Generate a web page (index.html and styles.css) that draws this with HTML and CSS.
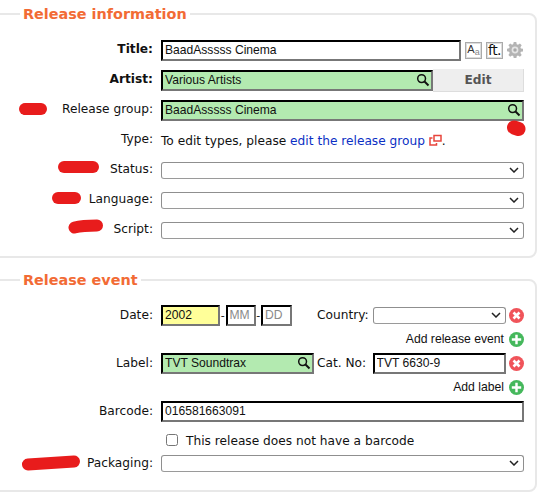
FILE: index.html
```html
<!DOCTYPE html>
<html lang="en">
<head>
<meta charset="utf-8">
<title>Release editor</title>
<link rel="stylesheet" href="styles.css">
</head>
<body>
<svg width="0" height="0" class="defs">
  <symbol id="mag" viewBox="0 0 14 14"><circle cx="5.6" cy="5.6" r="3.9" fill="none" stroke="#111" stroke-width="1.5"/><path d="M8.5 8.5l4 4" stroke="#111" stroke-width="1.9"/></symbol>
  <symbol id="chev" viewBox="0 0 10 6"><path d="M1 1l4 4 4-4" fill="none" stroke="#222" stroke-width="1.5"/></symbol>
  <symbol id="rem" viewBox="0 0 16 16"><circle cx="8" cy="8" r="8" fill="#f0545a"/><path d="M4.800 4.800l6.400 6.400M11.200 4.800l-6.400 6.400" stroke="#fff" stroke-width="2.800"/></symbol>
  <symbol id="add" viewBox="0 0 16 16"><circle cx="8" cy="8" r="8" fill="#45b85c"/><path d="M8 3v10M3 8h10" stroke="#fff" stroke-width="2.600"/></symbol>
</svg>

<fieldset class="box info">
  <legend>Release information</legend>
  <div class="row first">
    <label class="lbl strong">Title:</label>
    <input class="txt title-input" value="BaadAsssss Cinema">
    <span class="tool aa">A<small>a</small></span>
    <span class="tool ft">ft.</span>
    <svg class="gear" viewBox="0 0 16 16"><path fill="#b4b4b4" d="M6.7 0h2.6l.4 2.2 1.3.6L12.900 1.500l1.800 1.800-1.300 1.900.5 1.200 2.100.4v2.600l-2.100.4-.5 1.300 1.300 1.800-1.800 1.800-1.900-1.300-1.200.5-.4 2.100H6.700l-.4-2.100-1.300-.5-1.800 1.300-1.800-1.800 1.300-1.900-.6-1.200L0 9.300V6.700l2.100-.4.600-1.300L1.400 3.200l1.800-1.800 1.900 1.300 1.200-.6z"/><circle cx="8" cy="8" r="3.400" fill="#e4e4e4"/><circle cx="8" cy="8" r="1.700" fill="#a8a8a8"/></svg>
  </div>
  <div class="row">
    <label class="lbl strong">Artist:</label>
    <div class="lookup artist"><input class="txt ok" value="Various Artists"><svg class="mag"><use href="#mag"/></svg></div>
    <button class="edit" type="button">Edit</button>
  </div>
  <div class="row">
    <label class="lbl">Release group:</label>
    <div class="lookup grow"><input class="txt ok" value="BaadAsssss Cinema"><svg class="mag"><use href="#mag"/></svg></div>
  </div>
  <div class="row">
    <label class="lbl">Type:</label>
    <p class="note">To edit types, please <a href="#">edit the release group</a> <svg class="ext" viewBox="0 0 13 12"><path d="M5 1.500h7v5.500H5zM3.500 4H1v7h6.500V9" fill="none" stroke="#e8453c" stroke-width="1.500"/></svg>.</p>
  </div>
  <div class="row"><label class="lbl">Status:</label><div class="sel grow"><svg class="chev"><use href="#chev"/></svg></div></div>
  <div class="row"><label class="lbl">Language:</label><div class="sel grow"><svg class="chev"><use href="#chev"/></svg></div></div>
  <div class="row"><label class="lbl">Script:</label><div class="sel grow"><svg class="chev"><use href="#chev"/></svg></div></div>
</fieldset>

<fieldset class="box event">
  <legend>Release event</legend>
  <div class="row first-ev">
    <label class="lbl">Date:</label>
    <input class="txt year" value="2002"><span class="dash">-</span><input class="txt mm" placeholder="MM"><span class="dash">-</span><input class="txt dd" placeholder="DD">
    <label class="lbl2 country">Country:</label>
    <div class="sel cty"><svg class="chev"><use href="#chev"/></svg></div>
    <svg class="ico"><use href="#rem"/></svg>
  </div>
  <div class="row addrow"><span>Add release event</span><svg class="ico"><use href="#add"/></svg></div>
  <div class="row">
    <label class="lbl">Label:</label>
    <div class="lookup labelbox"><input class="txt ok" value="TVT Soundtrax"><svg class="mag"><use href="#mag"/></svg></div>
    <label class="lbl2 catno">Cat. No:</label>
    <input class="txt cat" value="TVT 6630-9">
    <svg class="ico"><use href="#rem"/></svg>
  </div>
  <div class="row addrow"><span>Add label</span><svg class="ico"><use href="#add"/></svg></div>
  <div class="row">
    <label class="lbl">Barcode:</label>
    <input class="txt grow" value="016581663091">
  </div>
  <div class="row r-check">
    <input type="checkbox" class="chk"><span class="chktext">This release does not have a barcode</span>
  </div>
  <div class="row r-pack"><label class="lbl">Packaging:</label><div class="sel grow"><svg class="chev"><use href="#chev"/></svg></div></div>
</fieldset>

<svg class="scribbles" viewBox="0 0 537 500" aria-hidden="true">
  <g fill="none" stroke="#e81c1c" stroke-linecap="round">
    <path d="M25 109h16" stroke-width="12"/>
    <path d="M64 167h29" stroke-width="12"/>
    <path d="M58 198h17" stroke-width="12"/>
    <path d="M74.500 227.500c8-2 15-2 22.500-2" stroke-width="12"/>
    <path d="M28 464.500c14-1 32-2 46-3" stroke-width="12"/>
    <path d="M514 127.500l4.500 1.500" stroke-width="14"/>
  </g>
</svg>
</body>
</html>
```
FILE: styles.css
```css
* { box-sizing: border-box; }
html, body { margin: 0; padding: 0; }
body {
  position: relative;
  width: 537px;
  height: 500px;
  overflow: hidden;
  background: #fff;
  font-family: "DejaVu Sans", sans-serif;
  font-size: 12.2px;
  color: #111;
}
.defs { position: absolute; }
.box {
  display: block;
  width: 546px;
  margin: 0 0 0 -9px;
  padding: 0 11px 0 7px;
  border: 2px solid #e8e8e8;
  border-radius: 8px;
  min-width: 0;
}
.info { margin-top: 5px; height: 253px; }
.event { margin-top: 13px; height: 221px; }
legend {
  margin-left: 20px;
  padding: 0 3px;
  font-size: 14.4px;
  line-height: 18px;
  font-weight: 700;
  color: #f26b35;
}
.row { display: flex; align-items: center; height: 30px; }
.first { margin-top: 12px; }
.first-ev { margin-top: 11px; }
.lbl {
  flex: none;
  width: 153px;
  margin-right: 8px;
  text-align: right;
  padding-bottom: 2px;
}
.event .lbl, .event .lbl2 { padding-bottom: 0; }
.strong { font-weight: 700; }
.txt {
  height: 21px;
  padding: 1px 2px;
  border: 2px inset #777;
  border-color: #222 #777 #777 #222;
  font-family: "Liberation Sans", sans-serif;
  font-size: 12.1px;
  color: #111;
  background: #fff;
  border-radius: 0;
  outline: none;
}
.txt::placeholder { color: #8a8a8a; }
.ok { background: #b3eab0; width: 100%; display: block; }
.grow { flex: 1 1 0; min-width: 0; }
.title-input { width: 300px; flex: none; }
.tool {
  flex: none;
  width: 17px;
  height: 17px;
  border: 1px solid #aaa;
  box-shadow: inset 0 0 0 1px #ddd;
  display: flex;
  align-items: center;
  justify-content: center;
  font-family: "Liberation Sans", sans-serif;
  background: #fff;
}
.aa { margin-left: 4px; font-size: 11px; line-height: 12px; color: #333; padding-bottom: 3px; }
.aa small { font-size: 9px; line-height: 9px; color: #888; align-self: flex-end; margin-bottom: -2px; }
.ft { margin-left: 4px; font-family: "DejaVu Sans", sans-serif; font-size: 14px; letter-spacing: -0.6px; }
.gear { flex: none; width: 16px; height: 16px; margin-left: 4px; }
.lookup { position: relative; }
.artist { width: 272px; flex: none; }
.labelbox { width: 153px; flex: none; }
.mag { position: absolute; right: 3px; top: 3px; width: 14px; height: 14px; }
.edit {
  flex: none;
  width: 91px;
  height: 23px;
  border: 0;
  border-right: 1px solid #ddd;
  border-bottom: 1px solid #ddd;
  background: #eeeeee;
  color: #555;
  font-family: "DejaVu Sans", sans-serif;
  font-size: 12.2px;
  font-weight: 700;
}
.note { margin: 0; padding-top: 2px; white-space: nowrap; }
.note a { color: #0b2fc4; text-decoration: none; }
.ext { width: 13px; height: 12px; vertical-align: -1px; }
.sel {
  position: relative;
  height: 17px;
  border: 1px solid #8f8f8f;
  border-bottom-color: #9a9a9a;
  border-radius: 3px;
  background: #fff;
}
.chev { position: absolute; right: 4px; top: 4px; width: 10px; height: 6px; }
.year { width: 59px; background: #ffff99; flex: none; }
.mm { width: 30px; flex: none; }
.dd { width: 31px; flex: none; }
.dash { flex: none; width: 5.5px; text-align: center; font-size: 11px; }
.lbl2 { flex: none; }
.country { margin-left: 25px; width: 55.5px; }
.catno { margin-left: 3px; width: 55.5px; }
.cty { width: 133px; flex: none; }
.cat { width: 133px; flex: none; }
.ico { flex: none; width: 15px; height: 15px; margin: 1px 0 0 3px; }
.addrow {
  height: 18px;
  justify-content: flex-end;
  font-family: "Liberation Sans", sans-serif;
  font-size: 12.2px;
}
.addrow .ico { margin-left: 5px; }
.r-check { height: 27px; padding-left: 166px; }
.chk { margin: 0 8px 0 0; width: 12px; height: 12px; }
.chktext { padding-top: 3px; }
.r-pack { height: 20px; }
.scribbles { position: absolute; left: 0; top: 0; width: 537px; height: 500px; pointer-events: none; }
```
